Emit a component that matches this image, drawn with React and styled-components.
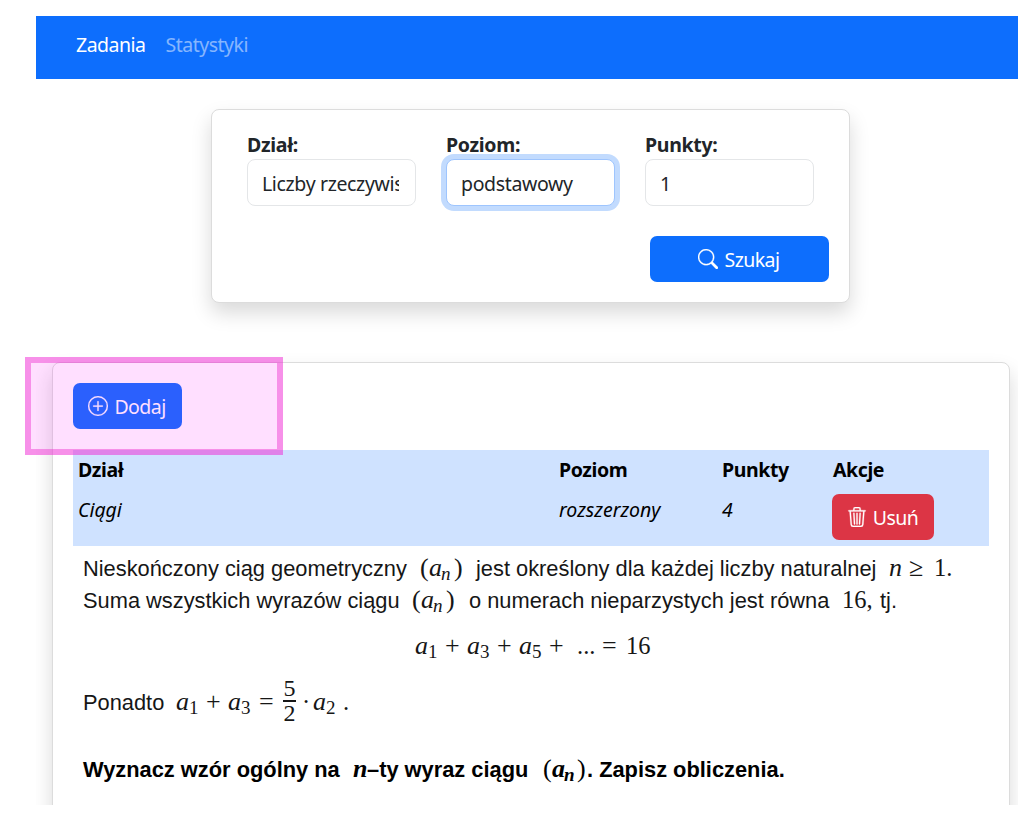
import React from 'react';
import styled, { createGlobalStyle, css } from 'styled-components';
import { BsSearch, BsPlusCircle, BsTrash3 } from 'react-icons/bs';

const Global = createGlobalStyle`
  * { box-sizing: border-box; }
  body { margin: 0; background: #fff; color: #212529; font: 19.5px/30px "Noto Sans", "Open Sans", sans-serif; letter-spacing: -0.5px; }
`;

const Page = styled.div`
  position: relative;
  height: 834px;
  overflow: hidden;
  padding: 16px 17px 0 36px;
`;
const Viewport = styled.div`
  height: 789px;
  overflow: hidden;
`;
const Navbar = styled.nav`
  display: flex;
  gap: 20px;
  height: 63px;
  padding: 14px 40px;
  background: #0d6efd;
`;
const NavLink = styled.a`
  color: ${(p) => (p.$active ? '#fff' : 'rgba(255, 255, 255, 0.5)')};
`;

const card = css`
  background: #fff;
  border: 1px solid #dcdcdc;
  border-radius: 8px;
  box-shadow: 0 10px 20px rgba(0, 0, 0, 0.15);
`;
const SearchCard = styled.form`
  ${card}
  width: 639px;
  height: 194px;
  margin: 30px 0 0 175px;
  padding: 20px 20px 20px 35px;
  display: flex;
  flex-direction: column;
`;
const Fields = styled.div`
  display: grid;
  grid-template-columns: repeat(3, 169px);
  column-gap: 30px;
`;
const Field = styled.label`
  display: flex;
  flex-direction: column;
`;
const Caption = styled.span`
  font-weight: 700;
  letter-spacing: -0.3px;
`;
const Select = styled.span`
  height: 47px;
  margin-top: -1px;
  padding: 0 15px;
  border: 1px solid ${(p) => (p.$focused ? '#9ec5fe' : '#e4e6e8')};
  border-radius: 8px;
  line-height: 48px;
  background: #fff;
  box-shadow: ${(p) => (p.$focused ? '0 0 0 5px #c2dbfe' : 'none')};
`;
const SelectValue = styled.span`
  display: block;
  width: 137px;
  margin-left: -1px;
  overflow: hidden;
  white-space: nowrap;
  letter-spacing: -0.35px;
`;
const Button = styled.button`
  display: flex;
  align-items: center;
  justify-content: center;
  gap: 6px;
  width: ${(p) => p.$width}px;
  height: 46px;
  padding: 2px 1px 0 0;
  border: 0;
  border-radius: 7px;
  background: ${(p) => (p.$danger ? '#dc3545' : '#0d6efd')};
  color: #fff;
  font: inherit;
  letter-spacing: -0.55px;
  svg { width: 20px; height: 20px; margin-top: -3px; stroke: currentColor; stroke-width: 0.2px; }
`;
const SearchActions = styled.div`
  display: flex;
  justify-content: flex-end;
  margin-top: 30px;
`;

const TasksCard = styled.section`
  ${card}
  height: 700px;
  margin: 59px 8px 0 16px;
  padding: 20px;
`;
const Toolbar = styled.div`
  height: 67px;
`;
const Table = styled.div`
  display: grid;
  grid-template-columns: 481px 163px 111px 1fr;
  grid-template-rows: 40px 56px;
  padding-left: 5px;
  background: #cfe2ff;
  color: #000;
`;
const Th = styled.div`
  padding-top: 5px;
  font-weight: 700;
  letter-spacing: -0.4px;
`;
const Td = styled.div`
  padding-top: 5px;
  font-style: italic;
  letter-spacing: 0;
`;
const ActionCell = styled.div`
  padding-top: 5px;
  margin: -1px 0 0 -1px;
`;

const Task = styled.article`
  padding: 6px 10px;
  color: #161616;
  font: 21.83px/32px "Liberation Sans", Arial, sans-serif;
  letter-spacing: 0;
  white-space: nowrap;
`;
const Line = styled.p`
  display: flex;
  align-items: baseline;
  height: 32px;
  margin: ${(p) => p.$top || 0}px 0 0 ${(p) => p.$indent || 0}px;
  font-weight: ${(p) => (p.$bold ? 700 : 400)};
  color: ${(p) => (p.$bold ? '#000' : 'inherit')};
`;
const Words = styled.span`
  flex: none;
  width: ${(p) => p.$w}px;
`;
const math = css`
  flex: none;
  width: ${(p) => p.$w}px;
  font-family: "Liberation Serif", "Times New Roman", serif;
  font-size: 24px;
`;
const Num = styled.span`
  ${math}
  font-size: 24.5px;
`;
const Var = styled.i`
  ${math}
  font-size: 26px;
`;
const Sign = styled.span`
  ${math}
  font-weight: 400;
  font-size: 26px;
`;
const Sub = styled.sub`
  ${math}
  font-size: 19px;
  line-height: 0;
  position: relative;
  top: 4px;
  vertical-align: baseline;
  font-style: ${(p) => (p.$italic ? 'italic' : 'normal')};
`;
const Fraction = styled.span`
  flex: none;
  align-self: flex-start;
  display: flex;
  flex-direction: column;
  align-items: center;
  width: 13px;
  margin: -9px 6px 0 0;
  font: 24px/22px "Liberation Serif", serif;
`;
const Bar = styled.span`
  width: 13px;
  height: 2px;
  margin: 1px 0 0;
  background: #161616;
`;

const Highlight = styled.div`
  position: absolute;
  left: 25px;
  top: 357px;
  width: 258px;
  height: 98px;
  border: 6px solid rgba(237, 50, 208, 0.46);
  background: rgba(255, 0, 255, 0.125);
`;

const Sequence = ({ after }) => (
  <>
    <Sign $w={9}>(</Sign>
    <Var $w={12}>a</Var>
    <Sub $w={13} $italic>n</Sub>
    <Sign $w={after + 1}>)</Sign>
  </>
);

export default function App() {
  return (
    <Page>
      <Global />
      <Viewport>
        <Navbar>
          <NavLink $active>Zadania</NavLink>
          <NavLink>Statystyki</NavLink>
        </Navbar>
        <SearchCard>
          <Fields>
            <Field>
              <Caption>Dział:</Caption>
              <Select><SelectValue>Liczby rzeczywiste</SelectValue></Select>
            </Field>
            <Field>
              <Caption>Poziom:</Caption>
              <Select $focused><SelectValue>podstawowy</SelectValue></Select>
            </Field>
            <Field>
              <Caption>Punkty:</Caption>
              <Select><SelectValue>1</SelectValue></Select>
            </Field>
          </Fields>
          <SearchActions>
            <Button type="button" $width={179}><BsSearch />Szukaj</Button>
          </SearchActions>
        </SearchCard>

        <TasksCard>
          <Toolbar>
            <Button type="button" $width={109}><BsPlusCircle />Dodaj</Button>
          </Toolbar>
          <Table>
            <Th>Dział</Th>
            <Th>Poziom</Th>
            <Th>Punkty</Th>
            <Th>Akcje</Th>
            <Td>Ciągi</Td>
            <Td>rozszerzony</Td>
            <Td>4</Td>
            <ActionCell>
              <Button type="button" $danger $width={102}><BsTrash3 />Usuń</Button>
            </ActionCell>
          </Table>
          <Task>
            <Line>
              <Words $w={337}>Nieskończony ciąg geometryczny</Words>
              <Sequence after={21} />
              <Words $w={413}>jest określony dla każdej liczby naturalnej</Words>
              <Var $w={20}>n</Var>
              <Sign $w={25}>≥</Sign>
              <Num $w={20}>1.</Num>
            </Line>
            <Line>
              <Words $w={329}>Suma wszystkich wyrazów ciągu</Words>
              <Sequence after={22} />
              <Words $w={373}>o numerach nieparzystych jest równa</Words>
              <Num $w={38}>16,</Num>
              <Words $w={17}>tj.</Words>
            </Line>
            <Line $top={14} $indent={332}>
              <Var $w={13}>a</Var><Sub $w={17}>1</Sub><Sign $w={22}>+</Sign>
              <Var $w={13}>a</Var><Sub $w={17}>3</Sub><Sign $w={22}>+</Sign>
              <Var $w={13}>a</Var><Sub $w={17}>5</Sub><Sign $w={28}>+</Sign>
              <Num $w={25}>...</Num><Sign $w={24}>=</Sign><Num $w={25}>16</Num>
            </Line>
            <Line $top={24}>
              <Words $w={93}>Ponadto</Words>
              <Var $w={13}>a</Var><Sub $w={17}>1</Sub><Sign $w={22}>+</Sign>
              <Var $w={13}>a</Var><Sub $w={18}>3</Sub><Sign $w={24}>=</Sign>
              <Fraction><span>5</span><Bar /><span>2</span></Fraction>
              <Num $w={11}>·</Num>
              <Var $w={13}>a</Var><Sub $w={17}>2</Sub><Num $w={6}>.</Num>
            </Line>
            <Line $top={35} $bold>
              <Words $w={270}>Wyznacz wzór ogólny na</Words>
              <Var $w={14}>n</Var>
              <Words $w={176}>–ty wyraz ciągu</Words>
              <Sequence after={9} />
              <Words $w={198}>. Zapisz obliczenia.</Words>
            </Line>
          </Task>
        </TasksCard>
      </Viewport>
      <Highlight />
    </Page>
  );
}
